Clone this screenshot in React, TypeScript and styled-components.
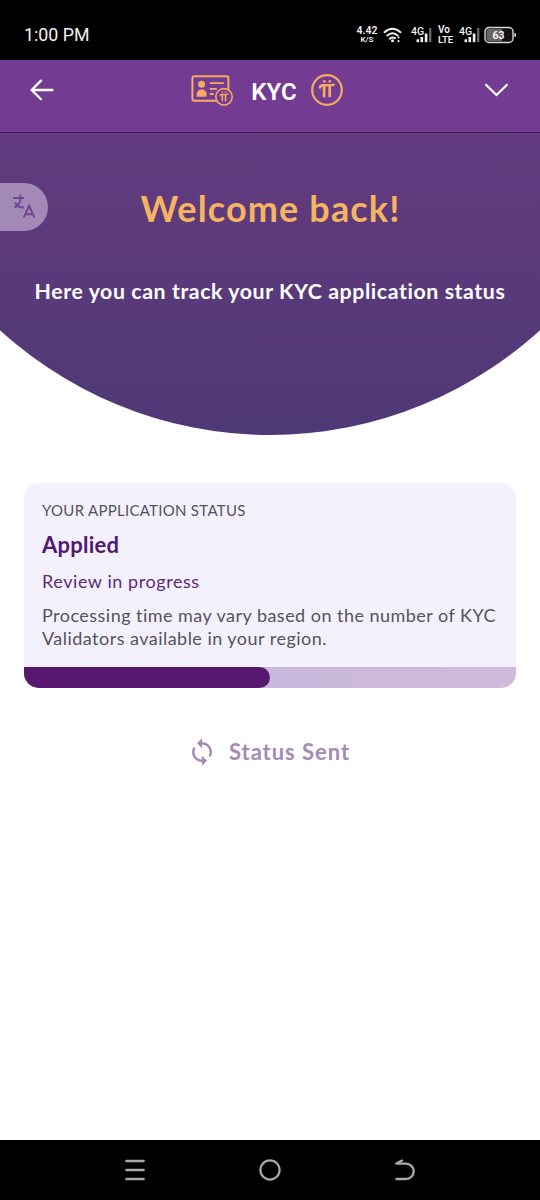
import React from "react";
import styled, { createGlobalStyle } from "styled-components";
import { MdSync } from "react-icons/md";

const GlobalStyle = createGlobalStyle`
  * { box-sizing: border-box; }
  body { margin: 0; background: #fff; }
  svg { display: block; flex: none; }
`;

const Screen = styled.div`
  width: 540px;
  height: 1200px;
  display: flex;
  flex-direction: column;
  background: #fff;
  font-family: Lato, sans-serif;
  overflow: hidden;
`;

const StatusBar = styled.header`
  height: 60px;
  flex: none;
  display: flex;
  align-items: center;
  justify-content: space-between;
  padding: 10px 23px 0 24px;
  background: #000;
  color: #f2f2f2;
  font-family: Roboto, sans-serif;
`;

const Clock = styled.span`
  font-size: 17.8px;
  line-height: 20px;
`;

const Indicators = styled.div`
  display: flex;
  align-items: center;
`;

const Stack = styled.div<{ $width: number; $gap: number; $align?: string }>`
  width: ${(p) => p.$width}px;
  margin: 0 ${(p) => p.$gap}px 2px 0;
  display: flex;
  flex-direction: column;
  align-items: ${(p) => p.$align ?? "center"};
  font-weight: 600;
  white-space: nowrap;
`;

const Tiny = styled.span<{ $size: number; $height?: number }>`
  font-size: ${(p) => p.$size}px;
  line-height: ${(p) => p.$height ?? 9}px;
`;

const Slot = styled.div<{ $gap: number }>`
  margin-right: ${(p) => p.$gap}px;
`;

const Navbar = styled.nav`
  height: 73px;
  flex: none;
  display: flex;
  align-items: center;
  justify-content: space-between;
  padding: 0 31px 12px 29px;
  background: #733c92;
  border-bottom: 1px solid #3c1f58;
`;

const Brand = styled.div`
  display: flex;
  align-items: center;
  margin-right: 4px;
`;

const BrandName = styled.span`
  margin: 3px 14px 0 18px;
  color: #fff;
  font-family: Roboto, sans-serif;
  font-size: 24px;
  line-height: 28px;
  font-weight: 600;
`;

const Hero = styled.section`
  position: relative;
  height: 302px;
  flex: none;
  display: flex;
  flex-direction: column;
  align-items: center;
  padding-top: 53px;
  background: linear-gradient(#643b80, #4e3875);
  clip-path: circle(400px at 270px -98px);
`;

const Title = styled.h1`
  margin: 0;
  color: #f5b45f;
  font-size: 36px;
  line-height: 44px;
  font-weight: 700;
  letter-spacing: 1.15px;
  text-indent: 1px;
  white-space: nowrap;
`;

const Subtitle = styled.p`
  margin: 46px 0 0;
  color: #fff;
  font-size: 21.3px;
  line-height: 30px;
  font-weight: 700;
  letter-spacing: 0.59px;
  white-space: nowrap;
`;

const TranslateTab = styled.button`
  position: absolute;
  left: 0;
  top: 50px;
  width: 48px;
  height: 48px;
  display: flex;
  align-items: center;
  padding: 0 0 0 12px;
  border: 0;
  border-radius: 0 24px 24px 0;
  background: #a389b8;
`;

const Main = styled.main`
  flex: 1;
  display: flex;
  flex-direction: column;
  align-items: center;
  padding: 48px 24px 0;
`;

const Card = styled.section`
  width: 492px;
  height: 205px;
  display: flex;
  flex-direction: column;
  justify-content: space-between;
  border-radius: 15px;
  background: #f4f1fe;
  overflow: hidden;
`;

const CardBody = styled.div`
  padding: 17px 18px 0;
`;

const Line = styled.p<{ $size: number; $height: number; $top?: number; $color?: string; $bold?: boolean; $track?: number }>`
  margin: ${(p) => p.$top ?? 0}px 0 0;
  color: ${(p) => p.$color ?? "#55525f"};
  font-size: ${(p) => p.$size}px;
  line-height: ${(p) => p.$height}px;
  font-weight: ${(p) => (p.$bold ? 700 : 400)};
  letter-spacing: ${(p) => p.$track ?? 0}px;
  white-space: nowrap;
`;

const Track = styled.div`
  height: 21px;
  background: linear-gradient(90deg, #c9b9dc 50%, #d1b9dc);
`;

const Progress = styled.div`
  width: 50%;
  height: 100%;
  border-radius: 0 11px 11px 0;
  background: #57196f;
`;

const StatusButton = styled.button`
  display: flex;
  align-items: center;
  gap: 12px;
  margin: 49px 3px 0 0;
  padding: 0;
  border: 0;
  background: none;
  color: #a58ab5;
  font-family: inherit;
  font-size: 22px;
  line-height: 30px;
  font-weight: 700;
  letter-spacing: 0.95px;
`;

const SystemNav = styled.footer`
  height: 60px;
  flex: none;
  display: flex;
  align-items: center;
  justify-content: space-between;
  padding: 0 124px;
  background: #000;
`;

function Wifi() {
  return (
    <svg width="20" height="16" viewBox="0 0 20 16" fill="none" stroke="#f2f2f2" strokeWidth="1.9" strokeLinecap="round">
      <path d="M1.5 5.2Q9.5-1.8 17.5 5.2M4.2 8.6Q9.5 4 14.8 8.6M6.7 11.7Q9.5 9.5 12 11.2" />
      <circle cx="9.5" cy="13.8" r="1.5" fill="#f2f2f2" stroke="none" />
      <path d="M15.5 10.4v.2M15.5 14v.2" strokeWidth="2" />
    </svg>
  );
}

function Signal() {
  return (
    <svg width="22" height="18" viewBox="0 0 22 18" fill="#f2f2f2">
      <text x="0" y="9" fontFamily="Roboto, sans-serif" fontSize="10.5" fontWeight="500">4G</text>
      <rect x="5.5" y="13.2" width="2.6" height="3" rx=".6" />
      <rect x="9.5" y="11" width="2.6" height="5.2" rx=".6" />
      <rect x="13.8" y="7.6" width="2.6" height="8.6" rx=".6" />
      <rect x="18" y="2" width="2.4" height="14.2" rx=".6" fill="#666" />
    </svg>
  );
}

function Battery() {
  return (
    <svg width="33" height="18" viewBox="0 0 33 18">
      <rect x="1" y="1.5" width="28" height="15" rx="4" fill="#111" stroke="#d8d8d8" strokeWidth="1.4" />
      <path d="M5 3h13v12H5a2.5 2.5 0 0 1-2.5-2.5v-7A2.5 2.5 0 0 1 5 3z" fill="#666" />
      <rect x="30.3" y="7" width="1.6" height="4" rx=".8" fill="#d8d8d8" />
      <text x="14.6" y="12.8" textAnchor="middle" fontFamily="Roboto, sans-serif" fontSize="10.5" fontWeight="600" fill="#fff">63</text>
    </svg>
  );
}

function PiMark() {
  return (
    <g fill="none" stroke="currentColor">
      <path d="M-7-.8C-7-3-6-4-4.4-4H4.2C5.8-4 6.6-4.3 7.2-5.6" strokeWidth="2.4" />
      <path d="M-2.9-4V8M2.7-4V8" strokeWidth="2.7" />
      <path d="M-4-8h2.6M1.5-8h2.6" strokeWidth="2.2" />
    </g>
  );
}

function IdCard() {
  return (
    <svg width="42" height="32" viewBox="0 0 42 32" color="#f5ab60" fill="none" stroke="currentColor">
      <rect x="1.4" y="2.3" width="36" height="24.4" rx="2" strokeWidth="2" />
      <circle cx="10.6" cy="10.3" r="3.5" fill="currentColor" stroke="none" />
      <path d="M5.7 22.7c-.4-5 1.3-7.2 4.9-7.2s5.4 2.2 4.9 7.2z" fill="currentColor" stroke="none" />
      <path d="M18.8 9.2h14M18.8 14.9h7M18.8 20h4" strokeWidth="1.8" />
      <circle cx="33" cy="22.8" r="8.2" fill="#733c92" strokeWidth="1.6" />
      <g transform="translate(33 22.8) scale(.57)"><PiMark /></g>
    </svg>
  );
}

function PiCoin() {
  return (
    <svg width="32" height="32" viewBox="0 0 32 32" color="#f5ab60">
      <circle cx="16" cy="16" r="14.8" fill="none" stroke="currentColor" strokeWidth="2.2" />
      <g transform="translate(16 15.3)"><PiMark /></g>
    </svg>
  );
}

export default function App() {
  return (
    <Screen>
      <GlobalStyle />
      <StatusBar>
        <Clock>1:00 PM</Clock>
        <Indicators>
          <Stack $width={22} $gap={5}>
            <Tiny $size={10.5} $height={11}>4.42</Tiny>
            <Tiny $size={8} $height={8}>K/S</Tiny>
          </Stack>
          <Slot $gap={8}><Wifi /></Slot>
          <Slot $gap={5}><Signal /></Slot>
          <Stack $width={16} $gap={5} $align="flex-start">
            <Tiny $size={10} $height={10}>Vo</Tiny>
            <Tiny $size={9.5}>LTE</Tiny>
          </Stack>
          <Slot $gap={3}><Signal /></Slot>
          <Battery />
        </Indicators>
      </StatusBar>
      <Navbar>
        <svg width="25" height="22" viewBox="0 0 25 22" fill="none" stroke="#fff" strokeWidth="2.3" strokeLinecap="round" strokeLinejoin="round">
          <path d="M23.5 11H2.6M12 1.6 2.6 11l9.4 9.2" />
        </svg>
        <Brand>
          <IdCard />
          <BrandName>KYC</BrandName>
          <PiCoin />
        </Brand>
        <svg width="25" height="14" viewBox="0 0 25 14" fill="none" stroke="#fff" strokeWidth="2.2">
          <path d="M1.5 1.3 12.5 12l11-10.7" />
        </svg>
      </Navbar>
      <Hero>
        <TranslateTab aria-label="Translate">
          <svg width="24" height="24" viewBox="0 0 24 24" overflow="visible" fill="none" stroke="#6f4690" strokeWidth="1.9">
            <path d="M1.2 3h11M8.3-.4V3C8.6 7.5 6.5 10.6 2.5 12.7M3.2 7.5C4.5 10.5 7 12.6 12 12.6" />
            <path d="M11.7 22.7 17.1 10.8 22.5 22.7M13.6 19.3h7" />
          </svg>
        </TranslateTab>
        <Title>Welcome back!</Title>
        <Subtitle>Here you can track your KYC application status</Subtitle>
      </Hero>
      <Main>
        <Card>
          <CardBody>
            <Line $size={15} $height={20} $track={0.28}>YOUR APPLICATION STATUS</Line>
            <Line $size={22} $height={28} $top={11} $color="#4f1a70" $bold $track={0.25}>Applied</Line>
            <Line $size={18} $height={24} $top={10} $color="#5b2a78" $track={0.57}>Review in progress</Line>
            <Line $size={18} $height={23} $top={11} $track={0.47}>
              Processing time may vary based on the number of KYC
              <br />
              Validators available in your region.
            </Line>
          </CardBody>
          <Track><Progress /></Track>
        </Card>
        <StatusButton>
          <MdSync size={30} />
          Status Sent
        </StatusButton>
      </Main>
      <SystemNav>
        <svg width="22" height="22" viewBox="0 0 22 22" stroke="#aaa" strokeWidth="2.4" strokeLinecap="round">
          <path d="M2.4 2h17.2M2.4 11h17.2M2.4 20h17.2" />
        </svg>
        <svg width="22" height="22" viewBox="0 0 22 22" fill="none" stroke="#aaa" strokeWidth="2.2">
          <circle cx="11" cy="11" r="9.6" />
        </svg>
        <svg width="22" height="22" viewBox="0 0 22 22" fill="none" stroke="#aaa" strokeWidth="2.3" strokeLinecap="round" strokeLinejoin="round">
          <path d="M8 1.6 2.4 4.6H12a7.7 7.7 0 0 1 0 15.400H2.400" />
        </svg>
      </SystemNav>
    </Screen>
  );
}
